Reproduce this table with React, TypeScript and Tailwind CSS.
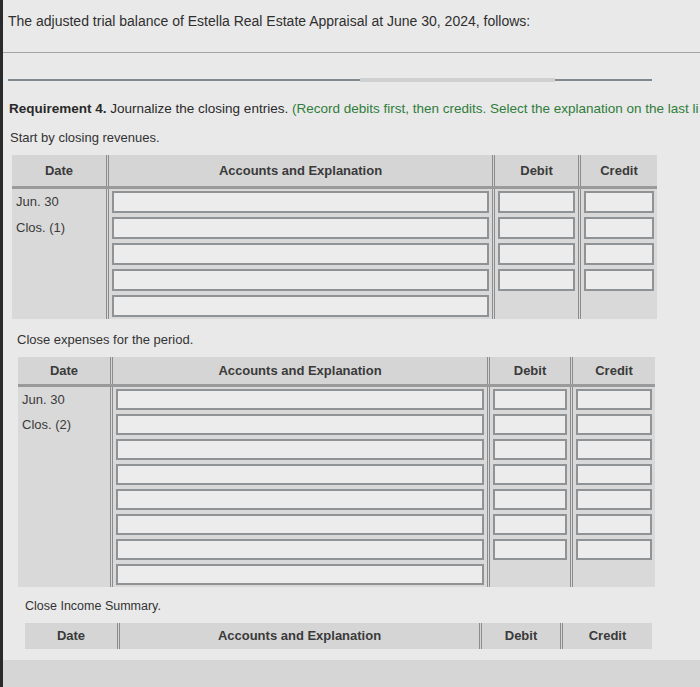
import React from "react";

type Table = {
  left: string;
  cols: string;
  headH: string;
  rowH: string;
  dateH: string;
  rowsAcct: number;
  rowsAmt: number;
  label?: string;
  showBody: boolean;
};

const sep = "border-l-[3px] border-double border-[#8c8c8c]";

function Input({ h }: { h: string }) {
  return <div className={`${h} border-2 border-[#8f9396] bg-[#ececec]`} />;
}

function Journal({ t }: { t: Table }) {
  return (
    <div className={`${t.left} w-fit`}>
      <div className={`grid ${t.cols} bg-[#d5d5d5] text-[13px] font-bold text-[#3a3a3a] ${t.showBody ? "border-b-[3px] border-[#9a9a9a]" : ""}`}>
        <div className={`${t.headH} flex items-center justify-center`}>Date</div>
        <div className={`${t.headH} flex items-center justify-center ${sep}`}>Accounts and Explanation</div>
        <div className={`${t.headH} flex items-center justify-center ${sep}`}>Debit</div>
        <div className={`${t.headH} flex items-center justify-center ${sep}`}>Credit</div>
      </div>
      {t.showBody && (
        <div className={`grid ${t.cols} bg-[#d9d9d9] text-[13px] text-[#3a3a3a]`}>
          <div className="flex flex-col pl-1">
            <span className={`flex ${t.dateH} items-center`}>Jun. 30</span>
            <span className={`flex ${t.dateH} items-center`}>{t.label}</span>
          </div>
          <div className={`flex flex-col gap-[4px] px-[3px] py-[2px] ${sep}`}>
            {Array.from({ length: t.rowsAcct }).map((_, i) => (
              <Input key={i} h={t.rowH} />
            ))}
          </div>
          <div className={`flex flex-col gap-[4px] px-[3px] py-[2px] ${sep}`}>
            {Array.from({ length: t.rowsAmt }).map((_, i) => (
              <Input key={i} h={t.rowH} />
            ))}
          </div>
          <div className={`flex flex-col gap-[4px] px-[3px] py-[2px] ${sep}`}>
            {Array.from({ length: t.rowsAmt }).map((_, i) => (
              <Input key={i} h={t.rowH} />
            ))}
          </div>
        </div>
      )}
    </div>
  );
}

export default function App() {
  return (
    <div className="relative h-[687px] w-[700px] overflow-hidden bg-[#e9e9e9] font-['Liberation_Sans',Arial,sans-serif] text-[13px] text-[#333]">
      <div className="absolute left-0 top-0 h-full w-[3px] bg-[#2a2a2a]" />
      <div className="h-[53px] border-b border-[#a3a5a6] pl-[8px] pt-[11px] text-[14px] text-[#2f2f2f]">
        The adjusted trial balance of Estella Real Estate Appraisal at June 30, 2024, follows:
      </div>
      <div className="flex items-center pl-[8px] pt-[25px]">
        <div className="h-[2px] w-[352px] bg-[#7f8a90]" />
        <div className="h-[4px] w-[195px] bg-[#d0d0d0]" />
        <div className="h-[2px] w-[97px] bg-[#7f8a90]" />
      </div>
      <div className="whitespace-nowrap pl-[9px] pt-[17px] text-[13.5px]">
        <span className="font-bold text-[#2a2a2a]">Requirement 4.</span>{" "}
        <span className="text-[#2a2a2a]">Journalize the closing entries. </span>
        <span className="text-[#2f7d3a]">(Record debits first, then credits. Select the explanation on the last li</span>
      </div>
      <div className="pl-[10px] pt-[9px] text-[#333]">Start by closing revenues.</div>
      <div className="pt-[7px]">
        <Journal
          t={{
            left: "ml-[12px]",
            cols: "grid-cols-[94px_386px_86px_79px]",
            headH: "h-[31px]",
            rowH: "h-[22px]",
            dateH: "h-[26px]",
            rowsAcct: 5,
            rowsAmt: 4,
            label: "Clos. (1)",
            showBody: true,
          }}
        />
      </div>
      <div className="pl-[17px] pt-[11px]">Close expenses for the period.</div>
      <div className="pt-[8px]">
        <Journal
          t={{
            left: "ml-[18px]",
            cols: "grid-cols-[92px_377px_83px_85px]",
            headH: "h-[27px]",
            rowH: "h-[21px]",
            dateH: "h-[25px]",
            rowsAcct: 8,
            rowsAmt: 7,
            label: "Clos. (2)",
            showBody: true,
          }}
        />
      </div>
      <div className="pl-[25px] pt-[10px] text-[12.5px]">Close Income Summary.</div>
      <div className="pt-[7px]">
        <Journal
          t={{
            left: "ml-[25px]",
            cols: "grid-cols-[92px_362px_81px_92px]",
            headH: "h-[26px]",
            rowH: "h-[21px]",
            dateH: "h-[25px]",
            rowsAcct: 0,
            rowsAmt: 0,
            showBody: false,
          }}
        />
      </div>
      <div className="absolute bottom-0 left-[3px] right-0 h-[27px] bg-[#d6d6d6]" />
    </div>
  );
}
